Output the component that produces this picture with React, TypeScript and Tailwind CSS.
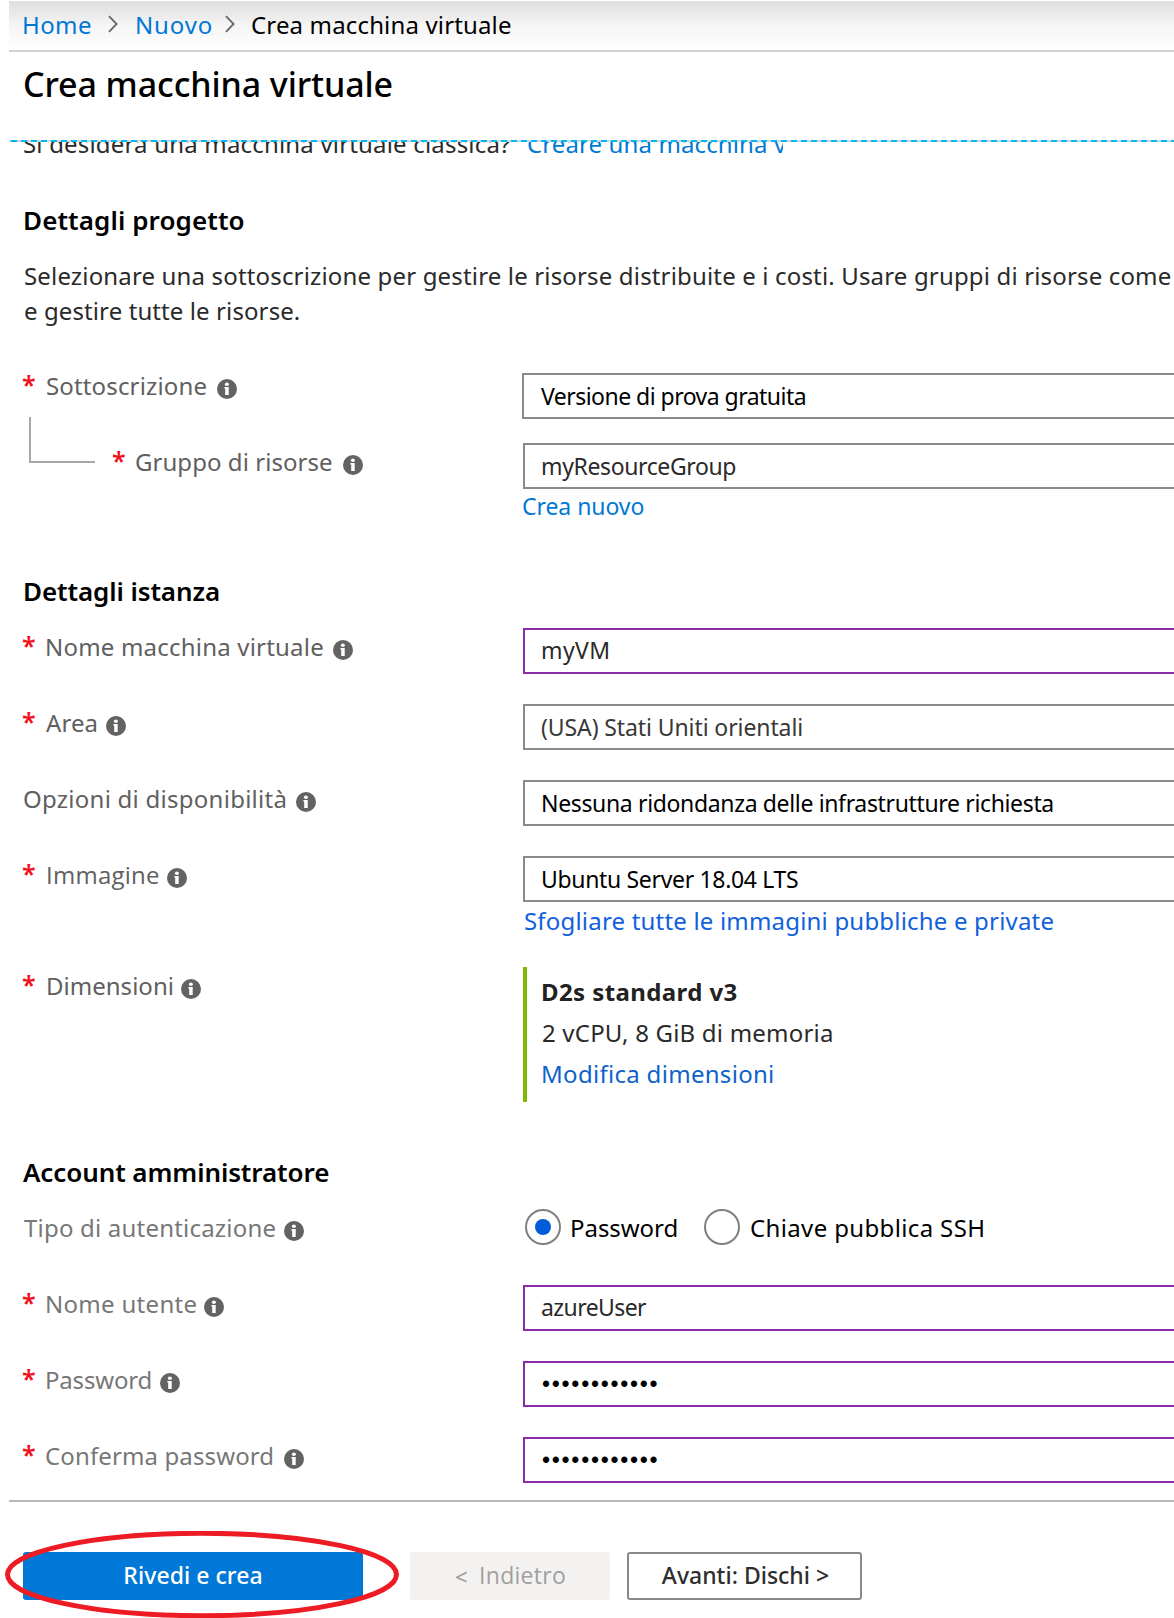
import type { ReactNode } from "react";

function InfoIcon() {
  return (
    <svg viewBox="0 0 20 20" className="mt-[9px] h-5 w-5 shrink-0">
      <circle cx="10" cy="10" r="10" fill="#636363" />
      <ellipse cx="9.9" cy="5.2" rx="2" ry="1.7" fill="#fff" />
      <path d="M7.4 8.1h4.3v7.9H8.2V9.6h-.8z" fill="#fff" />
    </svg>
  );
}

type RowProps = {
  label: string;
  labelClass: string;
  rowClass?: string;
  required?: boolean;
  labelOffset?: string;
  children: ReactNode;
};

function Row({
  label,
  labelClass,
  rowClass = "h-[76px]",
  required = true,
  labelOffset = "pt-[3px] pl-[14px]",
  children,
}: RowProps) {
  return (
    <div className={`flex shrink-0 items-start ${rowClass}`}>
      <div className={`flex w-[514px] shrink-0 leading-8 ${labelOffset}`}>
        {required && (
          <span className="-mt-[2px] -ml-px mr-px w-[22px] shrink-0 text-[25px] font-semibold text-[#f01020]">
            *
          </span>
        )}
        <span className={`shrink-0 whitespace-nowrap ${labelClass}`}>{label}</span>
        <InfoIcon />
      </div>
      <div className="min-w-0 flex-1">{children}</div>
    </div>
  );
}

function Field({ className, children }: { className: string; children: ReactNode }) {
  return (
    <div
      className={`flex h-[46px] items-center border-2 border-r-0 pl-[16px] text-[23px] whitespace-nowrap ${className}`}
    >
      {children}
    </div>
  );
}

function Heading({ className, children }: { className: string; children: ReactNode }) {
  return (
    <h2 className={`shrink-0 pl-[14px] text-[26px] leading-9 font-semibold text-black ${className}`}>
      {children}
    </h2>
  );
}

function Chevron({ className }: { className: string }) {
  return (
    <svg viewBox="0 0 10 18" className={`h-[18px] w-[10px] shrink-0 ${className}`}>
      <path d="M1 1.2 8.6 9 1 16.8" fill="none" stroke="#666" strokeWidth="1.8" />
    </svg>
  );
}

const DOTS = "••••••••••••";

function PasswordDots() {
  return (
    <span className="pl-px font-['Liberation_Sans',sans-serif] text-[23px] tracking-[1.73px] text-black">
      {DOTS}
    </span>
  );
}

export default function App() {
  return (
    <div className="relative flex h-[1618px] w-[1174px] flex-col overflow-hidden bg-white pt-px pl-[9px] font-['Noto_Sans',sans-serif] text-[24px] text-[#2a2a2a]">
      <nav className="flex h-[51px] shrink-0 items-start border-b-2 border-[#d4d4d4] bg-linear-to-b from-[#dedede] via-[#f5f5f5] to-white pt-[8px] pl-[12px] leading-8">
        <a className="w-[87px] pl-px tracking-[0.4px] text-[#0078d4]">Home</a>
        <Chevron className="mt-[6px]" />
        <a className="ml-[17px] w-[90px] tracking-[0.85px] text-[#0078d4]">Nuovo</a>
        <Chevron className="mt-[6px]" />
        <span className="ml-[16px] tracking-[0.15px] whitespace-nowrap text-black">
          Crea macchina virtuale
        </span>
      </nav>

      <h1 className="mt-[12px] h-[76px] shrink-0 pl-[14px] text-[34px] leading-10 font-medium tracking-[-0.1px] text-black">
        Crea macchina virtuale
      </h1>

      <div className="h-[2px] shrink-0 bg-[repeating-linear-gradient(90deg,#d4d4d4_0_2px,#00b7f1_2px_8px,#d4d4d4_8px_10px)]" />
      <div className="flex h-[60px] w-[774px] shrink-0 overflow-hidden">
        <p className="-mt-[14px] shrink-0 pl-[14px] leading-8 whitespace-nowrap">
          <span className="inline-block w-[504px] tracking-[0.18px]">
            Si desidera una macchina virtuale classica?
          </span>
          <a className="tracking-[0.11px] text-[#0078d4]">Creare una macchina v</a>
        </p>
      </div>

      <Heading className="h-[56px] tracking-[0.1px]">Dettagli progetto</Heading>

      <p className="h-[112px] shrink-0 pl-[15px] leading-[35px] tracking-[0.16px] whitespace-nowrap">
        Selezionare una sottoscrizione per gestire le risorse distribuite e i costi. Usare gruppi di
        risorse come
        <br />
        <span className="tracking-[0.1px]">e gestire tutte le risorse.</span>
      </p>

      <div className="relative flex shrink-0 flex-col">
        <Row
          label="Sottoscrizione"
          labelClass="w-[172px] pl-px tracking-[0.15px] text-[#606060]"
          labelOffset="pl-[14px]"
          rowClass="h-[73px]"
        >
          <Field className="mt-[3px] -ml-px border-[#8a8a8a] pl-[17px]! tracking-[-0.53px] text-black">
            Versione di prova gratuita
          </Field>
        </Row>
        <Row
          label="Gruppo di risorse"
          labelClass="w-[208px] tracking-[0.05px] text-[#606060]"
          labelOffset="pt-[3px] pl-[104px]"
          rowClass="h-[130px]"
        >
          <Field className="border-[#8a8a8a] tracking-[-0.38px]">myResourceGroup</Field>
          <a className="mt-px -ml-px block text-[23px] leading-8 tracking-[-0.06px] text-[#0078d4]">
            Crea nuovo
          </a>
        </Row>
        <div className="absolute top-[47px] left-[20px] h-[46px] w-[66px] border-b-2 border-l-2 border-[#a6a6a6]" />
      </div>

      <Heading className="h-[55px] tracking-[-0.1px]">Dettagli istanza</Heading>

      <Row label="Nome macchina virtuale" labelClass="w-[288px] tracking-[0.2px] text-[#606060]">
        <Field className="border-[#8a2da5] pb-px tracking-[0.4px]">myVM</Field>
      </Row>
      <Row label="Area" labelClass="w-[61px] pl-px tracking-[0.1px] text-[#606060]">
        <Field className="border-[#8a8a8a] tracking-[-0.1px] text-[#383838]">
          (USA) Stati Uniti orientali
        </Field>
      </Row>
      <Row
        label="Opzioni di disponibilità"
        labelClass="w-[273px] tracking-[0.26px] text-[#606060]"
        required={false}
      >
        <Field className="border-[#8a8a8a] tracking-[-0.35px] text-black">
          Nessuna ridondanza delle infrastrutture richiesta
        </Field>
      </Row>
      <Row
        label="Immagine"
        labelClass="w-[122px] pl-px font-['Open_Sans','Noto_Sans',sans-serif] tracking-[0.25px] text-[#606060]"
        rowClass="h-[111px]"
      >
        <Field className="border-[#8a8a8a] tracking-[-0.33px] text-black">
          Ubuntu Server 18.04 LTS
        </Field>
        <a className="mt-[3px] block pl-px leading-8 tracking-[0.19px] whitespace-nowrap text-[#1160dd]">
          Sfogliare tutte le immagini pubbliche e private
        </a>
      </Row>
      <Row
        label="Dimensioni"
        labelClass="w-[136px] pl-px tracking-[0.02px] text-[#606060]"
        rowClass="h-[187px]"
      >
        <div className="flex h-[135px] flex-col border-l-4 border-[#7fba00] pt-[4px] pl-[14px] leading-[41px]">
          <b className="font-bold tracking-[0.4px] text-[#222]">D2s standard v3</b>
          <span className="pl-px tracking-[0.2px]">2 vCPU, 8 GiB di memoria</span>
          <a className="tracking-[0.3px] text-[#0f62c9]">Modifica dimensioni</a>
        </div>
      </Row>

      <Heading className="h-[55px] tracking-[-0.1px]">Account amministratore</Heading>

      <Row
        label="Tipo di autenticazione"
        labelClass="w-[261px] pl-px tracking-[0.2px] text-[#777]"
        required={false}
      >
        <div className="flex h-9 items-center pl-[2px] text-black">
          <span className="flex h-9 w-9 shrink-0 items-center justify-center rounded-full border-2 border-[#808080]">
            <span className="h-4 w-4 rounded-full bg-[#015cda]" />
          </span>
          <span className="w-[135px] shrink-0 pt-[2px] pl-[9px] tracking-[-0.05px]">Password</span>
          <span className="ml-[8px] h-9 w-9 shrink-0 rounded-full border-2 border-[#808080]" />
          <span className="pt-[2px] pl-[10px] tracking-[0.36px] whitespace-nowrap">
            Chiave pubblica SSH
          </span>
        </div>
      </Row>
      <Row label="Nome utente" labelClass="w-[159px] tracking-[0.3px] text-[#777]">
        <Field className="border-[#8a2da5] pb-px tracking-[-0.58px]">azureUser</Field>
      </Row>
      <Row label="Password" labelClass="w-[115px] tracking-[-0.18px] text-[#777]">
        <Field className="border-[#8a2da5]">
          <PasswordDots />
        </Field>
      </Row>
      <Row
        label="Conferma password"
        labelClass="w-[239px] tracking-[0.12px] text-[#777]"
        rowClass="h-[63px]"
      >
        <Field className="border-[#8a2da5]">
          <PasswordDots />
        </Field>
      </Row>

      <footer className="flex shrink-0 border-t-2 border-[#b8b8b8] pt-[50px] pl-[14px] text-[23px] font-medium whitespace-nowrap">
        <button className="h-12 w-[340px] rounded-[3px] bg-[#0078d7] pb-[2px] tracking-[0.05px] text-white">
          Rivedi e crea
        </button>
        <button className="ml-[47px] flex h-12 w-[200px] items-center rounded-[3px] bg-[#f3f2f1] pb-[2px] pl-[44px] text-[#a0a09e]">
          <span className="w-[24px] pt-[2px] pl-px text-left text-[22px]">&lt;</span>
          <span className="pl-px font-['Open_Sans','Noto_Sans',sans-serif] text-[23px] font-medium tracking-[0.3px]">
            Indietro
          </span>
        </button>
        <button className="ml-[17px] h-12 w-[235px] rounded-[3px] border-2 border-[#888] bg-white pb-[2px] pl-[2px] text-[#2e2e2e]">
          Avanti: Dischi &gt;
        </button>
      </footer>

      <svg
        viewBox="0 0 398 88"
        className="pointer-events-none absolute top-[1531px] left-[3px] h-[88px] w-[398px]"
      >
        <ellipse cx="199" cy="43.5" rx="194.5" ry="41.2" fill="none" stroke="#ed1c24" strokeWidth="5" />
      </svg>
    </div>
  );
}
